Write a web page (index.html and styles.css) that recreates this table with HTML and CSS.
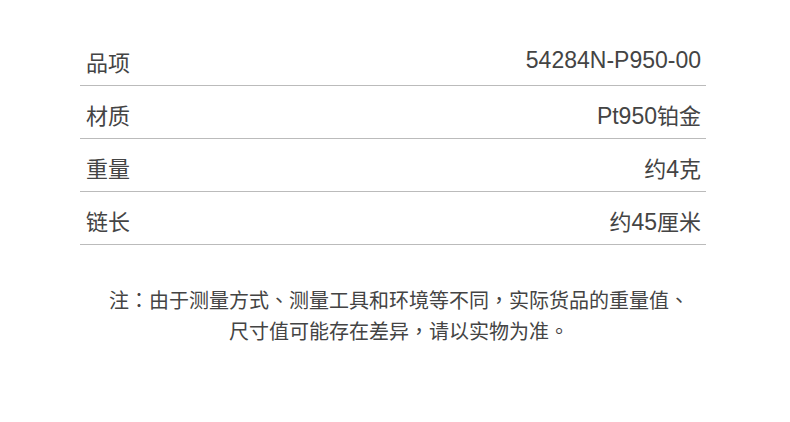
FILE: index.html
```html
<!DOCTYPE html>
<html lang="zh-CN">
<head>
<meta charset="utf-8">
<link rel="stylesheet" href="styles.css">
</head>
<body>
<div class="page">
  <div class="specs">
    <div class="row"><span class="label">品项</span><span class="value"><span class="num">54284N-P950-00</span></span></div>
    <div class="row"><span class="label">材质</span><span class="value"><span class="num">Pt950</span>铂金</span></div>
    <div class="row"><span class="label">重量</span><span class="value">约<span class="num">4</span>克</span></div>
    <div class="row"><span class="label">链长</span><span class="value">约<span class="num">45</span>厘米</span></div>
  </div>
  <p class="note">注<span class="p" lang="zh-TW">：</span>由于测量方式<span class="p" lang="zh-TW">、</span>测量工具和环境等不同<span class="p" lang="zh-TW">，</span>实际货品的重量值<span class="p" lang="zh-TW">、</span><br>尺寸值可能存在差异<span class="p" lang="zh-TW">，</span>请以实物为准<span class="p" lang="zh-TW">。</span></p>
</div>
</body>
</html>
```

FILE: styles.css
```css
html, body {
  margin: 0;
  padding: 0;
  background: #fff;
}
body {
  font-family: "Liberation Sans", "Noto Sans CJK SC", sans-serif;
  color: #444;
}
.page {
  width: 790px;
  height: 422px;
  padding-top: 33px;
  box-sizing: border-box;
}
.specs {
  margin: 0 84px 0 80px;
  display: flex;
  flex-direction: column;
}
.row {
  height: 53px;
  border-bottom: 1px solid #bbb;
  box-sizing: border-box;
  display: flex;
  align-items: center;
  justify-content: space-between;
  padding: 3px 5px 0 6px;
  font-size: 22px;
}
.num {
  font-size: 23px;
}
.note {
  margin: 40px 0 0 0;
  text-align: center;
  font-size: 20px;
  line-height: 29px;
  color: #444;
  padding-left: 8px;
}
.p {
  font-family: "Noto Sans CJK TC", sans-serif;
}
```
